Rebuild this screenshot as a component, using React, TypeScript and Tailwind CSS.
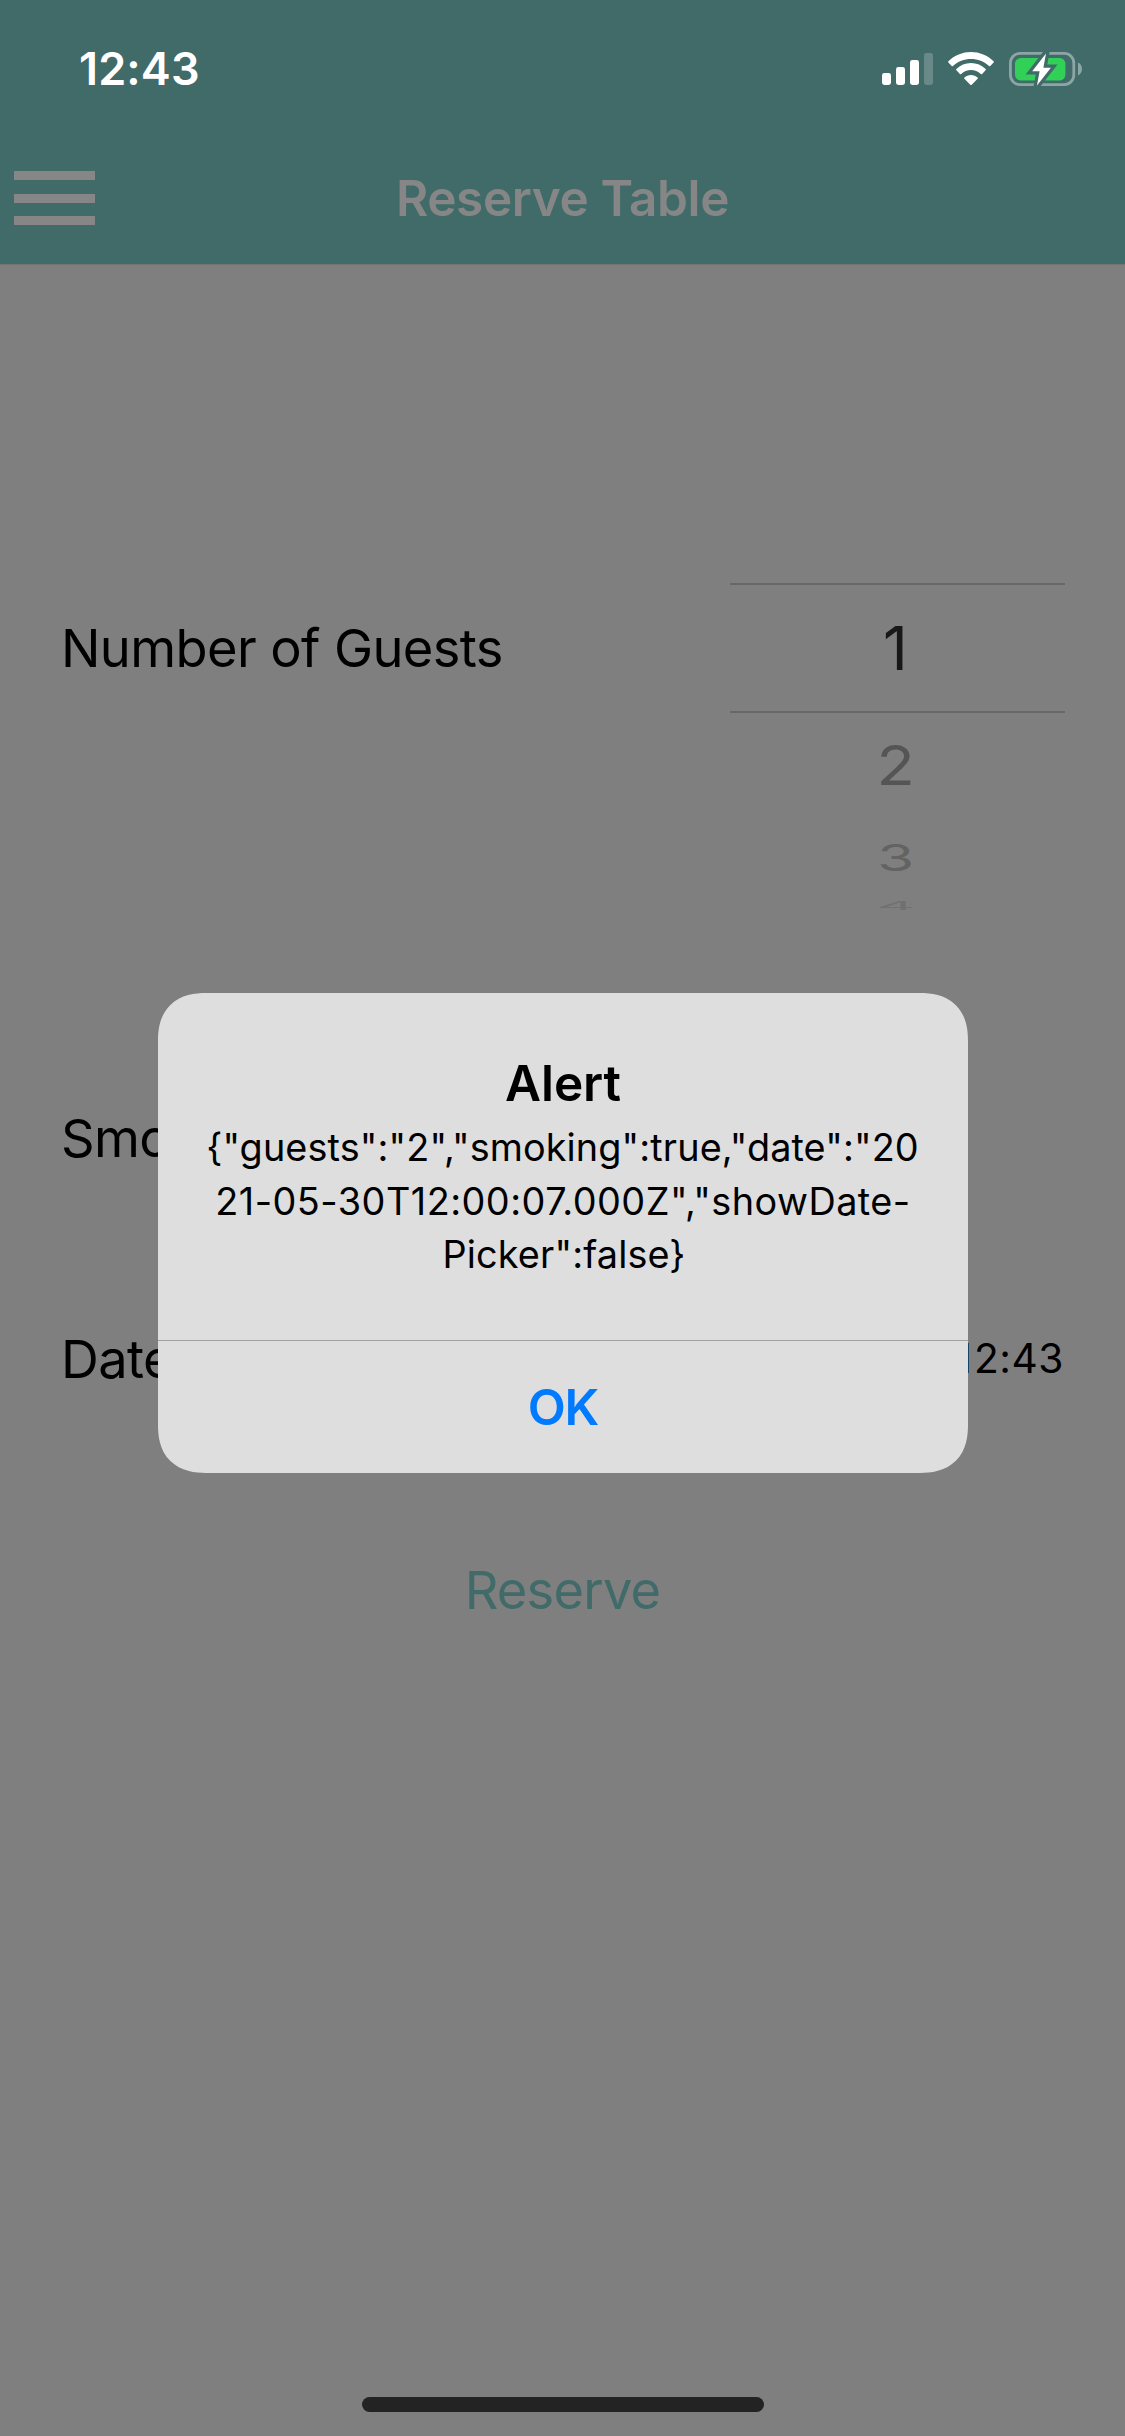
function StatusIcons() {
  return (
    <svg className="h-[42px] w-[206px]" viewBox="880 48 206 42" fill="none">
      <rect x="882" y="73" width="9" height="12" rx="2.4" fill="#fff" />
      <rect x="896" y="67" width="9" height="18" rx="2.4" fill="#fff" />
      <rect x="910" y="60" width="9" height="25" rx="2.4" fill="#fff" />
      <rect x="924" y="53" width="9" height="32" rx="2.4" fill="#698988" />

      <path
        d="M971 52C979.6 52 987.7 55.4 993.6 61.2Q994.2 61.8 993.6 62.4L990.3 65.9Q989.7 66.5 989.1 65.9C984.2 61.3 977.8 58.9 971 58.9C964.2 58.9 957.8 61.3 952.9 65.9Q952.3 66.5 951.7 65.9L948.4 62.4Q947.8 61.8 948.4 61.2C954.3 55.4 962.4 52 971 52Z"
        fill="#fff"
      />
      <path
        d="M971 63C976.6 63 981.8 65.2 985.6 68.9Q986.3 69.6 985.6 70.3L982.1 73.9Q981.4 74.5 980.8 73.9C978.1 71.5 974.7 70.1 971 70.1C967.3 70.1 963.9 71.5 961.2 73.9Q960.6 74.5 959.9 73.9L956.4 70.3Q955.7 69.6 956.4 68.9C960.2 65.2 965.4 63 971 63Z"
        fill="#fff"
      />
      <path
        d="M971 75C973.5 75 975.8 75.9 977.6 77.4Q978.3 78 977.6 78.7L971.7 84.7Q971 85.3 970.3 84.7L964.4 78.7Q963.7 78 964.4 77.4C966.2 75.9 968.5 75 971 75Z"
        fill="#fff"
      />

      <rect x="1010.4" y="53.4" width="63.4" height="31.2" rx="9.5" stroke="#8ca6a5" strokeWidth="2.8" />
      <path d="M1078 62.6C1080.6 63.8 1082 66.2 1082 69C1082 71.8 1080.6 74.2 1078 75.4Z" fill="#8ca6a5" />
      <rect x="1015" y="58" width="50.4" height="22.4" rx="5.6" fill="#31d158" />
      <path
        d="M1046 53.5L1032.2 71.2H1039.6L1037 85.5L1050.9 67.8H1043.4Z"
        fill="#406b69"
        stroke="#406b69"
        strokeWidth="6.5"
        strokeMiterlimit="8"
      />
      <path d="M1046 53.5L1032.2 71.2H1039.6L1037 85.5L1050.9 67.8H1043.4Z" fill="#fff" />
    </svg>
  );
}

function Header() {
  return (
    <header className="h-[265px] border-b border-[#757474] bg-[#406b69]">
      <div className="flex h-[138px] items-center justify-between pr-[39px] pl-[79px]">
        <time className="pb-px text-[45px] leading-none font-semibold tracking-[0.15px] text-white">12:43</time>
        <StatusIcons />
      </div>
      <div className="-mt-[6px] grid h-[132px] grid-cols-[108px_1fr_108px] items-center">
        <button aria-label="Menu" className="ml-[13.5px] flex w-[81px] flex-col gap-[13.5px]">
          <span className="h-[9px] bg-[#868686]" />
          <span className="h-[9px] bg-[#868686]" />
          <span className="h-[9px] bg-[#868686]" />
        </button>
        <h1 className="pt-[2px] text-center text-[49.5px] leading-none font-semibold tracking-[-0.4px] text-[#868686]">
          Reserve Table
        </h1>
      </div>
    </header>
  );
}

function GuestPicker() {
  return (
    <div className="flex h-[648px] w-[335px] flex-col pt-[259px] text-[61px] leading-none">
      <div className="flex h-[130px] items-center justify-center border-y-2 border-[#676767] pr-[5px] text-[#181818]">1</div>
      <div className="flex h-[104px] items-center justify-center pr-[4px] text-[#555555]">
        <span className="scale-x-[1.03] scale-y-[0.9]">2</span>
      </div>
      <div className="flex h-[80px] items-center justify-center pr-[4px] text-[#636363]">
        <span className="scale-x-[0.98] scale-y-[0.61]">3</span>
      </div>
      <div className="flex h-[17px] items-center justify-center pr-[4px] text-[#717171]">
        <span className="scale-x-[0.98] scale-y-[0.2]">4</span>
      </div>
    </div>
  );
}

function AlertDialog() {
  return (
    <div className="absolute inset-0 pt-[993px]">
      <div
        role="alertdialog"
        className="ml-[158px] flex h-[480px] w-[810px] flex-col overflow-hidden rounded-[48px] bg-[#dedede] text-center text-black [corner-shape:superellipse(1.25)]"
      >
        <div className="h-[347px] pt-[60px]">
          <h2 className="text-[49.5px] leading-[61px] font-semibold tracking-[-0.1px]">Alert</h2>
          <p className="mt-[7px] text-[37.8px] leading-[53.5px] whitespace-nowrap">
            <span className="block pr-px tracking-[0.12px]">{'{"guests":"2","smoking":true,"date":"20'}</span>
            <span className="block tracking-[0.48px]">{'21-05-30T12:00:07.000Z","showDate-'}</span>
            <span className="block pl-[2px] tracking-[0.16px]">{'Picker":false}'}</span>
          </p>
        </div>
        <button className="flex flex-1 items-center justify-center border-t border-[#a0a0a0] pt-[2px] text-[49.5px] leading-none font-semibold tracking-[-1.2px] text-[#007aff]">
          OK
        </button>
      </div>
    </div>
  );
}

export default function App() {
  return (
    <div className="relative flex h-[2436px] w-[1125px] flex-col overflow-hidden bg-[#7f7f7f] font-[Inter,sans-serif]">
      <Header />
      <main className="flex flex-1 flex-col px-[60px] pt-[59px] text-[52.4px] leading-none tracking-[-0.6px] text-black">
        <div className="flex h-[648px] items-center justify-between">
          <label className="pl-px">Number of Guests</label>
          <GuestPicker />
        </div>
        <div className="mt-[57px] flex h-[218px] items-center">
          <label className="pl-px">Smo</label>
        </div>
        <div className="flex h-[224px] items-center justify-between">
          <label className="pl-px">Date</label>
          <span className="mr-px text-[40.7px] tracking-[0.5px]">
            <span className="tracking-[2px]">1</span>2:43
          </span>
        </div>
        <button className="flex h-[238px] items-center justify-center tracking-[-0.78px] text-[#406b69]">Reserve</button>
      </main>
      <div className="mb-[24px] ml-[362px] h-[15px] w-[402px] rounded-full bg-[#232323]" />
      <AlertDialog />
    </div>
  );
}
